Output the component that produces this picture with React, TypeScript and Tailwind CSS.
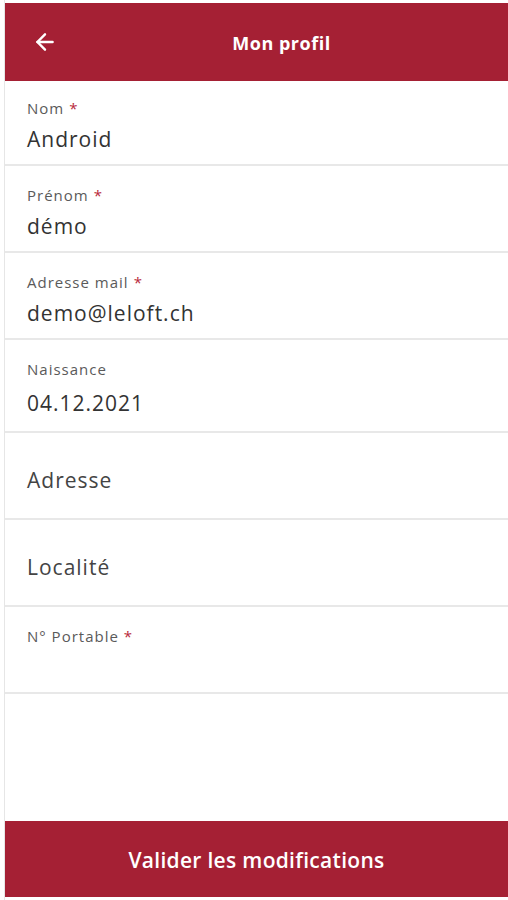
import { ArrowLeft } from 'lucide-react';

interface FieldProps {
  label: string;
  value?: string;
  required?: boolean;
  tall?: boolean;
}

function Field({ label, value, required, tall }: FieldProps) {
  return (
    <div
      className={`border-b-2 border-[#e8e8e8] px-[22px] pt-[19px] ${tall ? 'h-[93px]' : 'h-[87px]'}`}
    >
      <div className="text-[15px] leading-[20px] tracking-[1px] text-[#5a5a5a]">
        {label}
        {required && <span className="ml-[5px] text-[#b8283c]">*</span>}
      </div>
      {value && (
        <div
          className={`text-[21px] leading-[28px] tracking-[1px] text-[#333] ${tall ? 'mt-[10px]' : 'mt-[7px]'}`}
        >
          {value}
        </div>
      )}
    </div>
  );
}

function Placeholder({ text }: { text: string }) {
  return (
    <div className="flex h-[87px] items-center border-b-2 border-[#e8e8e8] px-[22px] pt-[9px]">
      <span className="text-[21px] leading-[28px] tracking-[1px] text-[#444]">{text}</span>
    </div>
  );
}

export default function App() {
  return (
    <div
      className="flex h-[900px] w-[508px] flex-col bg-white pl-[4px]"
      style={{ fontFamily: '"Open Sans", "Noto Sans", sans-serif' }}
    >
      <div className="flex h-[900px] flex-col border-l border-[#e6e6e6]">
        {/* Header */}
        <div className="mt-[3px] flex h-[78px] items-center bg-[#a52034]">
          <button className="flex w-[56px] items-center justify-center pl-[24px] text-white" aria-label="Retour">
            <ArrowLeft size={26} strokeWidth={2.25} />
          </button>
          <div className="flex-1 pr-[6px] pt-[3px] text-center text-[18px] font-bold tracking-[0.5px] text-white">
            Mon profil
          </div>
        </div>

        {/* Form */}
        <div className="flex-1 -mt-[2px]">
          <Field label="Nom" value="Android" required />
          <Field label="Prénom" value="démo" required />
          <Field label="Adresse mail" value="demo@leloft.ch" required />
          <Field label="Naissance" value="04.12.2021" tall />
          <Placeholder text="Adresse" />
          <Placeholder text="Localité" />
          <Field label="N° Portable" required />
        </div>

        {/* Footer */}
        <button className="mb-[3px] flex h-[76px] items-center justify-center bg-[#a52034] pt-[3px] text-[21px] font-semibold tracking-[0.3px] text-white">
          Valider les modifications
        </button>
      </div>
    </div>
  );
}
